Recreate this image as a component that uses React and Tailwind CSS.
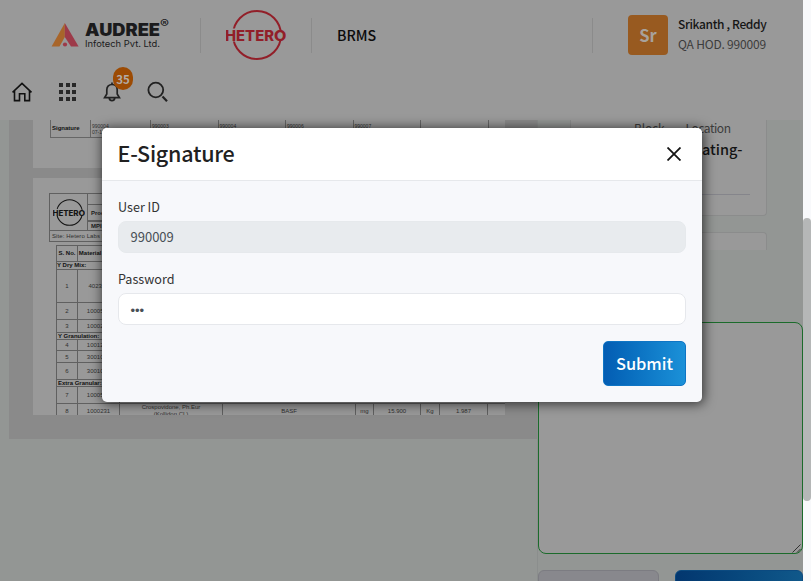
import React from "react";

function HeteroLogo({ color, className, bg }) {
  return (
    <svg viewBox="0 0 60 50" className={className}>
      <circle cx="31" cy="25" r="24" fill="none" stroke={color} strokeWidth="2" />
      <rect x="0" y="18.5" width="50" height="13" fill={bg} />
      <circle cx="54" cy="25.5" r="5.5" fill={bg} />
      <g fontFamily="Inter, sans-serif" fontWeight="800" fontSize="14" fill={color}>
        <text x="-1" y="30.7" textLength="49" lengthAdjust="spacingAndGlyphs">HETER</text>
        <text x="48" y="30.7" textLength="12.4" lengthAdjust="spacingAndGlyphs">O</text>
      </g>
    </svg>
  );
}

function AudreeLogo() {
  return (
    <div className="flex w-[118px] h-[34px]">
      <svg viewBox="0 0 28 24" className="w-[28px] h-[24px] mt-[5px] shrink-0">
        <path d="M13.8 0 L.6 23.5 H8.5 L13.8 14 Z" fill="#a8652a" />
        <path d="M13.8 0 L27.6 23.5 H20 L13.8 14 Z" fill="#9d3a49" />
        <circle cx="14" cy="21.5" r="2.1" fill="#9d3a49" />
      </svg>
      <svg viewBox="0 0 90 34" className="w-[90px] h-[34px] ml-[5px] shrink-0" fill="#1b1b1d" fontFamily="Inter, sans-serif">
        <text x="1" y="18.4" textLength="75" lengthAdjust="spacingAndGlyphs" fontWeight="900" fontSize="17">AUDREE</text>
        <text x="76" y="10" textLength="9" lengthAdjust="spacingAndGlyphs" fontWeight="600" fontSize="11.5">®</text>
        <text x="1" y="28.8" textLength="75" lengthAdjust="spacingAndGlyphs" fontSize="8.8">Infotech Pvt. Ltd.</text>
      </svg>
    </div>
  );
}

function Header() {
  return (
    <header className="h-[120px] bg-[#999999] shrink-0">
      <div className="flex h-[70px] items-center pl-[51px]">
        <AudreeLogo />
        <div className="ml-[31px] w-px h-[35px] bg-[#8b8b8b]" />
        <HeteroLogo color="#921f29" bg="#999999" className="ml-[25px] w-[60px] h-[50px]" />
        <div className="ml-[25px] w-px h-[35px] bg-[#8b8b8b]" />
        <div className="ml-[25px] w-[255px] text-[14.2px] leading-[24px] font-medium text-[#0b0b0b]">BRMS</div>
        <div className="w-px h-[35px] bg-[#8b8b8b]" />
        <div className="ml-[35px] size-10 rounded bg-[#985a20] flex items-center justify-center text-[16.5px] leading-[22px] font-bold text-[#a8a29c]">Sr</div>
        <div className="ml-[10px] pb-[2px] text-[12px] leading-[20px] whitespace-nowrap">
          <div className="font-medium text-[#151515] tracking-[-0.36px]">Srikanth , Reddy</div>
          <div className="text-[#3c3c3c] tracking-[-0.2px]">QA HOD. 990009</div>
        </div>
      </div>
      <div className="flex h-[44px] items-center pl-[12px]">
        <svg viewBox="0 0 21 20" className="w-[21px] h-[20px]" fill="none" stroke="#111" strokeWidth="1.6">
          <path d="M.5 10.3 L10 1.3 L19.5 10.3 M2.5 8.8 V18.6 H7.5 V11.7 H12.8 V18.6 H17.5 V8.8" />
        </svg>
        <div className="ml-[26px] grid grid-cols-3 gap-x-[2.5px] gap-y-[3px]">
          {Array.from({ length: 9 }, (_, i) => (
            <span key={i} className="size-[4px] bg-[#282828]" />
          ))}
        </div>
        <div className="relative ml-[27px]">
          <svg viewBox="0 0 18 20" className="w-[18px] h-[20px]" fill="none" stroke="#222" strokeWidth="1.7">
            <path d="M9 .5 V2.4 M1.6 15.6 H16.4 L14.2 12 V7.7 C14.2 4.5 12 2.5 9 2.5 S3.8 4.5 3.8 7.7 V12 Z M6.2 16.2 C6.8 19.5 11.2 19.5 11.8 16.2" />
          </svg>
          <span className="absolute left-[10px] -top-[15px] w-[20px] h-[23px] rounded-full bg-[#9c4b04] text-[#b3aca6] text-[11.5px] leading-[25px] font-bold text-center">35</span>
        </div>
        <svg viewBox="0 0 22 22" className="ml-[26px] w-[22px] h-[22px]" fill="none" stroke="#222">
          <circle cx="8.8" cy="9" r="7.4" strokeWidth="1.8" />
          <path d="M15.5 15.5 L20 20.2" strokeWidth="2.2" />
        </svg>
      </div>
    </header>
  );
}

const signatures = ["990004", "990003", "990004", "990006", "990007", "", ""];

const materials = [
  { h: "h-[33px]", no: "1", code: "402317" },
  { h: "h-[17px]", no: "2", code: "1000514" },
  { h: "h-[13px]", no: "3", code: "1000233" },
  { h: "h-[7px]", title: "Y Granulation:" },
  { h: "h-[11px]", no: "4", code: "1001254" },
  { h: "h-[12px]", no: "5", code: "3001022" },
  { h: "h-[17px]", no: "6", code: "3001022" },
  { h: "h-[7px]", title: "Extra Granular:" },
  { h: "h-[17px]", no: "7", code: "1000512" },
];

function Cell({ w, children }) {
  return <div className={`${w} shrink-0 border-r border-[#606060] flex items-center justify-center text-center`}>{children}</div>;
}

function DocumentPane() {
  return (
    <div className="w-[528px] h-[319px] bg-[#8a8a8a] shrink-0 pl-[24px] font-['Liberation_Sans',sans-serif] text-[6px] leading-[7px] text-[#303030] whitespace-nowrap">
      <div className="w-[472px] h-[48px] bg-[#999999] pl-[17px]">
        <div className="flex h-[18px] w-[455px] border-b border-l border-[#666]">
          <div className="w-[40px] shrink-0 border-r border-[#666] pt-[5px] pl-[1px] font-bold text-[#111]">Signature</div>
          {signatures.map((s, i) => (
            <div key={i} className={`${i === 0 ? "w-[60px]" : i === 6 ? "w-[18px]" : "w-[67.5px]"} shrink-0 ${i === 6 ? "" : "border-r border-[#666]"} pl-[1px] pt-[3px] text-[5px] leading-[6px]`}>
              {s}
              {i === 0 && <div>07-10-2024</div>}
            </div>
          ))}
        </div>
      </div>
      <div className="mt-[10px] w-[472px] h-[237px] bg-[#999999] pl-[16px] pt-[15px] overflow-hidden">
        <div className="w-[440px] h-[49px] border border-[#606060] flex flex-col">
          <div className="flex h-[37px] border-b border-[#606060]">
            <div className="w-[38px] border-r border-[#606060] flex items-center justify-center">
              <HeteroLogo color="#151515" bg="#999999" className="w-[32px] h-[27px]" />
            </div>
            <div className="grow flex flex-col font-bold text-[#202020]">
              <div className="h-[11px] border-b border-[#606060]" />
              <div className="h-[17px] border-b-2 border-[#606060] pl-[3px] pt-[5px]">Product Name</div>
              <div className="h-[8px] pl-[3px] pt-px">MPI No.</div>
            </div>
          </div>
          <div className="pl-[2px] pt-[2px] tracking-[0.1px]">Site: Hetero Labs Limited</div>
        </div>
        <div className="mt-[3px] ml-[7px] w-[449px] border-l border-t border-[#606060]">
          <div className="flex h-[16px] border-b border-[#606060] font-bold text-[#111]">
            <Cell w="w-[21px]">S. No.</Cell>
            <Cell w="w-[42px]">Material Code</Cell>
          </div>
          <div className="h-[8px] border-b border-[#606060] font-bold text-[#111]">Y Dry Mix:</div>
          {materials.map((m, i) =>
            m.title ? (
              <div key={i} className={`${m.h} border-b border-[#606060] font-bold text-[#111] pl-px leading-[6px]`}>{m.title}</div>
            ) : (
              <div key={i} className={`${m.h} flex border-b border-[#606060] leading-[6px]`}>
                <Cell w="w-[21px]">{m.no}</Cell>
                <Cell w="w-[42px]">{m.code}</Cell>
              </div>
            )
          )}
          <div className="flex h-[15px]">
            <Cell w="w-[21px]">8</Cell>
            <Cell w="w-[42px]">1000231</Cell>
            <div className="w-[103px] shrink-0 border-r border-[#606060] text-center">
              Crospovidone, Ph.Eur
              <br />
              (Kollidon CL)
            </div>
            <Cell w="w-[133px]">BASF</Cell>
            <Cell w="w-[18px]">mg</Cell>
            <Cell w="w-[47px]">15.900</Cell>
            <Cell w="w-[19px]">Kg</Cell>
            <Cell w="w-[48px]">1.987</Cell>
          </div>
        </div>
      </div>
    </div>
  );
}

function SidePane() {
  return (
    <div className="w-[266px] shrink-0 flex flex-col border-l border-[#8b8e8d]">
      <div className="ml-[32px] w-[197px] h-[96px] rounded-b border border-t-0 border-[#8b8c8c] bg-[#999999] px-[16px]">
        <div className="flex h-[75px] border-b border-[#85858b]">
          <div className="w-[84px] shrink-0 pl-[47px] text-[12px] leading-[16px] text-[#3c3c3c] tracking-[-0.2px]">Block</div>
          <div className="pl-[14.5px]">
            <div className="text-[12px] leading-[16px] text-[#3c3c3c] tracking-[-0.45px]">Location</div>
            <div className="mt-[3px] w-[57px] flex justify-end text-[14.5px] leading-[20px] font-medium text-[#141414] whitespace-nowrap">Coating-</div>
          </div>
        </div>
      </div>
      <div className="ml-[32px] mt-[16px] w-[197px] h-[18px] rounded-t border border-b-0 border-[#8b8c8c] bg-[#999999]" />
      <div className="mt-[72px] w-[265px] h-[232px] shrink-0 rounded-lg border border-[#1b6b2b] bg-[#999999] flex items-end justify-end">
        <svg viewBox="0 0 10 10" className="size-[10px]" stroke="#333" strokeWidth="1">
          <path d="M0.5 9.5 L8.5 1.5 M5 9.5 L8.5 6" />
        </svg>
      </div>
      <div className="mt-4 flex w-[265px] gap-4">
        <div className="w-[121px] h-[40px] rounded-md border border-[#7c7c82] bg-[#88888d]" />
        <div className="w-[128px] h-[40px] rounded-md border border-[#0b4a80] bg-gradient-to-r from-[#03376f] to-[#10588a]" />
      </div>
    </div>
  );
}

function SignatureDialog() {
  return (
    <div className="absolute left-[102px] top-[128px] w-[600px] h-[274px] rounded-[5px] bg-[#f7f8fb] shadow-[1px_1px_12px_1px_rgba(0,0,0,0.65)] overflow-hidden">
      <div className="flex h-[53px] items-center justify-between bg-white border-b border-[#e6e8eb] pl-[15.5px] pr-[21px]">
        <h2 className="pb-[2px] text-[21.5px] leading-[32px] font-medium text-[#212121] tracking-[-0.25px]">E-Signature</h2>
        <svg viewBox="0 0 14 14" className="size-[14px]" stroke="#151515" strokeWidth="1.8">
          <path d="M.5 .5 L13.5 13.5 M13.5 .5 L.5 13.5" />
        </svg>
      </div>
      <div className="flex flex-col px-4 pt-[16px] text-[12.6px] leading-[20px] text-[#333]">
        <label>User ID</label>
        <div className="mt-[4px] h-8 rounded-lg bg-[#e8ebee] border border-[#e6e9ec] flex items-center px-[11.5px] text-[13px] text-[#495057]">990009</div>
        <label className="mt-4">Password</label>
        <div className="mt-[4px] h-8 rounded-lg bg-white border border-[#e6e8ec] flex items-center px-[11.5px] pt-[3px] font-['Liberation_Sans',sans-serif] text-[13px] text-[#495057]">•••</div>
        <button className="mt-4 self-end w-[83px] h-[45px] rounded-[5px] border border-[#0f75c4] bg-gradient-to-r from-[#045db3] to-[#1b91d8] pb-[2px] text-white text-[16.4px] leading-[24px] font-medium">Submit</button>
      </div>
    </div>
  );
}

export default function App() {
  return (
    <div className="relative flex w-[811px] h-[581px] overflow-hidden font-['Noto_Sans_CJK_SC',sans-serif]">
      <div className="w-[803px] h-[581px] flex flex-col bg-[#939694] overflow-hidden">
        <Header />
        <main className="flex pl-[9px]">
          <DocumentPane />
          <SidePane />
        </main>
      </div>
      <div className="w-[8px] bg-[#f8f9fb] pt-[218px]">
        <div className="h-[283px] rounded-full bg-[#b5b7b7]" />
      </div>
      <SignatureDialog />
    </div>
  );
}
